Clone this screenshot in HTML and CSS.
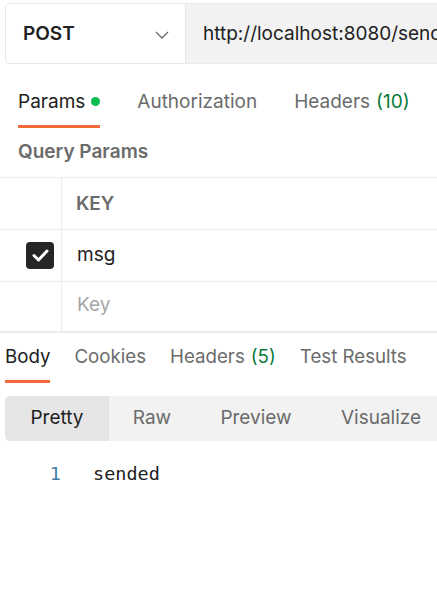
FILE: index.html
```html
<!DOCTYPE html>
<html>
<head>
<meta charset="utf-8">
<link rel="stylesheet" href="styles.css">
</head>
<body>
<div class="page">
  <div class="request-bar">
    <div class="method">
      <span class="method-name">POST</span>
      <svg class="chevron" width="14" height="8" viewBox="0 0 14 8"><path d="M1 1l6 6 6-6" fill="none" stroke="#6b6b6b" stroke-width="1.3"/></svg>
    </div>
    <div class="url"><span class="url-text">http://localhost:8080/send</span></div>
  </div>

  <div class="tabs req-tabs">
    <div class="tab active">Params<span class="dot"></span></div>
    <div class="tab">Authorization</div>
    <div class="tab">Headers <span class="count">(10)</span></div>
  </div>

  <div class="section-title">Query Params</div>

  <div class="table">
    <div class="row">
      <div class="cell check"></div>
      <div class="cell key head">KEY</div>
    </div>
    <div class="row">
      <div class="cell check">
        <span class="checkbox">
          <svg width="17" height="13" viewBox="0 0 17 13"><path d="M2 6.5l4.5 4.5L15 2" fill="none" stroke="#fff" stroke-width="3" stroke-linecap="round" stroke-linejoin="round"/></svg>
        </span>
      </div>
      <div class="cell key">msg</div>
    </div>
    <div class="row last">
      <div class="cell check"></div>
      <div class="cell key placeholder">Key</div>
    </div>
  </div>

  <div class="tabs res-tabs">
    <div class="tab active">Body</div>
    <div class="tab">Cookies</div>
    <div class="tab">Headers <span class="count">(5)</span></div>
    <div class="tab">Test Results</div>
  </div>

  <div class="segmented">
    <div class="seg selected">Pretty</div>
    <div class="seg">Raw</div>
    <div class="seg">Preview</div>
    <div class="seg">Visualize</div>
  </div>

  <div class="code">
    <span class="ln">1</span>
    <span class="src">sended</span>
  </div>
</div>
</body>
</html>
```

FILE: styles.css
```css
html, body {
  margin: 0;
  padding: 0;
  background: #ffffff;
  overflow: hidden;
}
body {
  font-family: Inter, "Noto Sans", sans-serif;
  color: #212121;
  width: 437px;
  height: 601px;
}
.page {
  width: 437px;
  overflow: hidden;
}
.request-bar {
  display: flex;
  margin: 3px 0 0 5px;
  height: 61px;
  width: 700px;
}
.method {
  width: 181px;
  box-sizing: border-box;
  display: flex;
  align-items: center;
  justify-content: space-between;
  padding: 0 16px 0 17px;
  border: 1px solid #e6e6e6;
  border-radius: 5px 0 0 5px;
  background: #fff;
}
.method-name {
  font-size: 19px;
  font-weight: 600;
  color: #212121;
}
.chevron {
  margin-top: 2px;
}
.url {
  flex: 1;
  background: #f2f2f2;
  display: flex;
  align-items: center;
  padding-left: 17px;
  font-size: 19px;
  color: #212121;
  white-space: nowrap;
  border-top: 1px solid #ececec;
  border-bottom: 1px solid #ececec;
}
.tabs {
  display: flex;
  white-space: nowrap;
}
.tab {
  font-size: 19px;
  color: #6b6b6b;
  display: flex;
  align-items: center;
  box-sizing: border-box;
  border-bottom: 3px solid transparent;
}
.tab.active {
  color: #212121;
  border-bottom-color: #f26b3a;
}
.count {
  color: #0b7a3b;
  margin-left: 6px;
}
.req-tabs {
  padding-left: 18px;
  gap: 37px;
  margin-top: 14px;
  height: 50px;
}
.req-tabs .tab {
  padding-bottom: 1px;
}
.dot {
  width: 9px;
  height: 9px;
  border-radius: 50%;
  background: #0cbb52;
  margin-left: 6px;
  margin-top: 1px;
}
.section-title {
  font-size: 19px;
  font-weight: 600;
  color: #6b6b6b;
  padding-left: 18px;
  height: 49px;
  box-sizing: border-box;
  padding-bottom: 2px;
  display: flex;
  align-items: center;
}
.table {
  border-top: 1px solid #ececec;
}
.row {
  display: flex;
  height: 51px;
  border-bottom: 1px solid #ececec;
}
.row.last {
  border-bottom: 2px solid #ececec;
  height: 49px;
}
.cell {
  display: flex;
  align-items: center;
  font-size: 19px;
}
.key {
  padding-left: 15px;
  padding-bottom: 3px;
  color: #212121;
}
.key.head {
  font-weight: 600;
  color: #6b6b6b;
  padding-left: 14px;
  padding-bottom: 1px;
}
.key.placeholder {
  color: #a6a6a6;
  padding-bottom: 5px;
}
.check {
  width: 62px;
  box-sizing: border-box;
  border-right: 1px solid #ececec;
  justify-content: flex-end;
  padding-right: 7px;
}
.checkbox {
  width: 28px;
  height: 27px;
  border-radius: 4px;
  background: #262626;
  display: flex;
  align-items: center;
  justify-content: center;
}
.res-tabs {
  padding-left: 5px;
  gap: 24px;
  height: 50px;
}
.res-tabs .tab {
  font-size: 18.7px;
}
.segmented {
  display: flex;
  margin: 13px 0 0 5px;
  height: 45px;
  width: 600px;
  background: #f2f2f2;
  border-radius: 5px 0 0 5px;
  overflow: hidden;
}
.seg {
  font-size: 19px;
  color: #6b6b6b;
  display: flex;
  align-items: center;
  justify-content: center;
  padding-bottom: 2px;
  box-sizing: border-box;
}
.seg:nth-child(1) { width: 104px; }
.seg:nth-child(2) { width: 86px; }
.seg:nth-child(3) { width: 122px; }
.seg:nth-child(4) { width: 128px; }
.seg.selected {
  background: #e6e6e6;
  color: #212121;
}
.code {
  display: flex;
  align-items: center;
  height: 30px;
  margin-top: 17px;
  font-family: "DejaVu Sans Mono", "Liberation Mono", monospace;
  font-size: 18.5px;
}
.ln {
  width: 61px;
  text-align: right;
  color: #3d7ea6;
  box-sizing: border-box;
}
.src {
  margin-left: 32px;
  color: #212121;
}
```
